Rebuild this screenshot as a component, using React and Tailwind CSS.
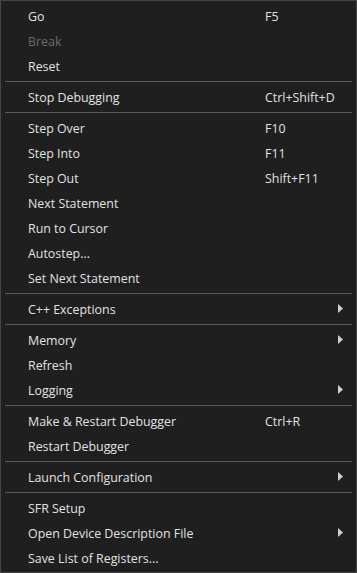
import React from "react";

const menu = [
  { label: "Go", shortcut: "F5" },
  { label: "Break", disabled: true },
  { label: "Reset" },
  "sep",
  { label: "Stop Debugging", shortcut: "Ctrl+Shift+D" },
  "sep",
  { label: "Step Over", shortcut: "F10" },
  { label: "Step Into", shortcut: "F11" },
  { label: "Step Out", shortcut: "Shift+F11" },
  { label: "Next Statement" },
  { label: "Run to Cursor" },
  { label: "Autostep..." },
  { label: "Set Next Statement" },
  "sep",
  { label: "C++ Exceptions", sub: true },
  "sep",
  { label: "Memory", sub: true },
  { label: "Refresh" },
  { label: "Logging", sub: true },
  "sep",
  { label: "Make & Restart Debugger", shortcut: "Ctrl+R" },
  { label: "Restart Debugger" },
  "sep",
  { label: "Launch Configuration", sub: true },
  "sep",
  { label: "SFR Setup" },
  { label: "Open Device Description File", sub: true },
  { label: "Save List of Registers..." },
];

function Arrow() {
  return (
    <svg width="5" height="9" viewBox="0 0 5 9" className="fill-[#d0d0d0] -mt-[4px]">
      <path d="M0 0 L5 4.5 L0 9 Z" />
    </svg>
  );
}

export default function App() {
  return (
    <div
      className="w-[357px] h-[573px] bg-[#1f1f1f] border border-[#454545] py-[2px] text-[12.4px] text-[#e2e2e2]"
      style={{ fontFamily: '"Open Sans", "Noto Sans", sans-serif' }}
    >
      {menu.map((item, i) =>
        item === "sep" ? (
          <div key={i} className="h-[6px] flex items-center px-[4px]">
            <div className="h-px w-full bg-[#5a5a5a]" />
          </div>
        ) : (
          <div key={i} className="h-[25px] flex items-center pt-[4px] pl-[27px] pr-[13px]">
            <span className={`flex-1 ${item.disabled ? "text-[#6b6b6b]" : ""}`}>
              {item.label}
            </span>
            {item.shortcut && <span className="w-[78px]">{item.shortcut}</span>}
            {item.sub && <Arrow />}
          </div>
        )
      )}
    </div>
  );
}
